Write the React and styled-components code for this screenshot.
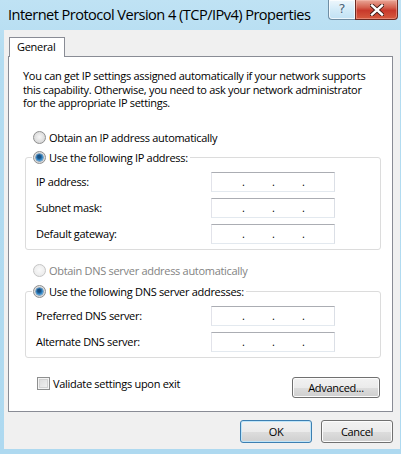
import styled, { createGlobalStyle } from "styled-components";

const GlobalStyle = createGlobalStyle`
  html, body { margin: 0; padding: 0; background: #fff; }
  body {
    font-family: "Open Sans", "Noto Sans", sans-serif;
    font-size: 11px;
    letter-spacing: -0.3px;
    color: #000;
  }
  * { box-sizing: border-box; }
`;

const ipRows = ["IP address:", "Subnet mask:", "Default gateway:"];
const dnsRows = ["Preferred DNS server:", "Alternate DNS server:"];

function Radio({ checked, disabled, children }) {
  return (
    <RadioRow $disabled={disabled}>
      <RadioMark $checked={checked} $disabled={disabled} />
      <span>{children}</span>
    </RadioRow>
  );
}

function IpInput() {
  return (
    <IpBox>
      <Octet />
      <Dot>.</Dot>
      <Octet />
      <Dot>.</Dot>
      <Octet />
      <Dot>.</Dot>
      <Octet />
    </IpBox>
  );
}

function AddressGroup({ legend, rows }) {
  return (
    <Group>
      <Legend>
        <Radio checked>{legend}</Radio>
      </Legend>
      <Rows>
        {rows.map((r) => (
          <FieldRow key={r}>
            <span>{r}</span>
            <IpInput />
          </FieldRow>
        ))}
      </Rows>
    </Group>
  );
}

export default function App() {
  return (
    <>
      <GlobalStyle />
      <Window>
        <TitleBar>
          <Title>Internet Protocol Version 4 (TCP/IPv4) Properties</Title>
          <Caption>
            <HelpButton>?</HelpButton>
            <CloseButton>
              <svg width="14" height="12" viewBox="0 0 14 12">
                <path
                  d="M2 1.5 L12 10.5 M12 1.5 L2 10.5"
                  stroke="#3b1712"
                  strokeWidth="4.2"
                  strokeLinecap="square"
                />
                <path
                  d="M2 1.5 L12 10.5 M12 1.5 L2 10.5"
                  stroke="#fff"
                  strokeWidth="2.4"
                  strokeLinecap="square"
                />
              </svg>
            </CloseButton>
          </Caption>
        </TitleBar>
        <Client>
          <Tabs>
            <Tab>General</Tab>
          </Tabs>
          <Panel>
            <Intro>
              You can get IP settings assigned automatically if your network supports
              <br />
              this capability. Otherwise, you need to ask your network administrator
              <br />
              for the appropriate IP settings.
            </Intro>
            <Option $top={20}>
              <Radio>Obtain an IP address automatically</Radio>
            </Option>
            <GroupWrap $top={4}>
              <AddressGroup legend="Use the following IP address:" rows={ipRows} />
            </GroupWrap>
            <Option $top={13}>
              <Radio disabled>Obtain DNS server address automatically</Radio>
            </Option>
            <GroupWrap $top={5}>
              <AddressGroup legend="Use the following DNS server addresses:" rows={dnsRows} />
            </GroupWrap>
            <BottomRow>
              <CheckLabel>
                <CheckBox />
                <span>Validate settings upon exit</span>
              </CheckLabel>
              <Button $w={88} $h={21}>Advanced...</Button>
            </BottomRow>
          </Panel>
          <Footer>
            <Button $w={72} $h={23} $default>OK</Button>
            <Button $w={72} $h={23}>Cancel</Button>
          </Footer>
        </Client>
      </Window>
    </>
  );
}

const Window = styled.div`
  width: 401px;
  height: 454px;
  display: flex;
  flex-direction: column;
  background: linear-gradient(#bfe2f4, #b3dcf1 60px, #aed9f0);
  padding: 0 1px 5px 4px;
`;

const TitleBar = styled.div`
  height: 30px;
  display: flex;
  align-items: flex-start;
  margin-left: -4px;
  margin-right: -1px;
  padding-right: 3px;
`;

const Title = styled.div`
  flex: 1;
  min-width: 0;
  padding: 4px 0 0 8px;
  font-size: 14.6px;
  letter-spacing: -0.55px;
  line-height: 20px;
  white-space: nowrap;
  color: #000;
`;

const Caption = styled.div`
  display: flex;
  flex: none;
  height: 20px;
`;

const HelpButton = styled.div`
  width: 27px;
  height: 20px;
  border: 1px solid #6f8ea4;
  border-top: none;
  border-right: none;
  border-radius: 0 0 0 4px;
  background: linear-gradient(#eef7fc, #d3ebf8 50%, #c2e2f4);
  box-shadow: inset 0 0 0 1px rgba(255, 255, 255, 0.7);
  color: #4a6478;
  font-size: 13px;
  letter-spacing: 0;
  line-height: 18px;
  text-align: center;
  font-family: "DejaVu Sans", sans-serif;
  text-shadow: 0 0 2px #fff;
`;

const CloseButton = styled.div`
  width: 43px;
  height: 20px;
  border: 1px solid #6b2a22;
  border-top: none;
  border-radius: 0 0 4px 0;
  background: linear-gradient(#e9a797, #d4604e 40%, #c8392b 55%, #d65a3e);
  box-shadow: inset 0 0 0 1px rgba(255, 200, 190, 0.4);
  display: flex;
  align-items: center;
  justify-content: center;
`;

const Client = styled.div`
  flex: 1;
  background: #f0f0f0;
  padding: 7px 7px 5px 4px;
  display: flex;
  flex-direction: column;
`;

const Tabs = styled.div`
  display: flex;
  padding-left: 1px;
`;

const Tab = styled.div`
  position: relative;
  z-index: 1;
  height: 20px;
  margin-bottom: -1px;
  padding: 0 9px 0 7px;
  border: 1px solid #898c95;
  border-bottom: none;
  background: #fff;
  line-height: 18px;
`;

const Panel = styled.div`
  width: 385px;
  border: 1px solid #898c95;
  background: #fff;
  padding: 12px 12px 13px 14px;
  display: flex;
  flex-direction: column;
`;

const Intro = styled.p`
  margin: 0;
  line-height: 13.5px;
  white-space: nowrap;
`;

const Option = styled.div`
  margin: ${(p) => p.$top}px 0 0 10px;
`;

const RadioRow = styled.div`
  display: flex;
  align-items: center;
  gap: 3px;
  height: 16px;
  white-space: nowrap;
  color: ${(p) => (p.$disabled ? "#838383" : "#000")};
`;

const RadioMark = styled.span`
  position: relative;
  width: 13px;
  height: 13px;
  flex: none;
  border-radius: 50%;
  border: 1px solid ${(p) => (p.$disabled ? "#c5c5c5" : "#8e8f8f")};
  background: ${(p) =>
    p.$disabled
      ? "radial-gradient(circle at 50% 45%, #fafafa, #e6e6e6)"
      : "radial-gradient(circle at 50% 45%, #f6f6f6, #d9d9d9 70%, #cfcfcf)"};
  &::after {
    content: "";
    display: ${(p) => (p.$checked ? "block" : "none")};
    position: absolute;
    left: 2px;
    top: 2px;
    width: 7px;
    height: 7px;
    border-radius: 50%;
    background: radial-gradient(circle at 45% 40%, #1a4f80 25%, #2d83c5 55%, #7cc4ef);
    box-shadow: 0 0 0 0.5px #2a6496;
  }
`;

const GroupWrap = styled.div`
  margin: ${(p) => p.$top}px 0 0 2px;
`;

const Group = styled.fieldset`
  width: 356px;
  margin: 0;
  border: 1px solid #dcdcdc;
  border-radius: 3px;
  padding: 6px 0 5px 10px;
`;

const Legend = styled.legend`
  margin-left: -4px;
  padding: 0 2px 0 1px;
`;

const Rows = styled.div`
  display: flex;
  flex-direction: column;
  gap: 6px;
`;

const FieldRow = styled.div`
  display: grid;
  grid-template-columns: 175px 124px;
  align-items: center;
  height: 20px;
  white-space: nowrap;
`;

const IpBox = styled.div`
  width: 124px;
  height: 20px;
  display: flex;
  padding-left: 2px;
  border: 1px solid;
  border-color: #abadb3 #dbdfe6 #e3e9ef #e2e3ea;
  background: #fff;
`;

const Octet = styled.span`
  width: 28px;
`;

const Dot = styled.span`
  width: 2px;
  line-height: 17px;
  font-size: 11px;
  letter-spacing: 0;
  text-align: center;
`;

const BottomRow = styled.div`
  display: flex;
  justify-content: space-between;
  align-items: flex-start;
  margin-top: 19px;
`;

const CheckLabel = styled.div`
  display: flex;
  align-items: center;
  gap: 3px;
  height: 14px;
  margin-left: 14px;
  white-space: nowrap;
`;

const CheckBox = styled.span`
  width: 13px;
  height: 13px;
  flex: none;
  border: 1px solid #8e8f8f;
  background: linear-gradient(135deg, #d8d8d8, #f4f4f4);
  box-shadow: inset 0 0 0 1px #f4f4f4, inset 0 0 0 2px #d2d2d2;
`;

const Button = styled.div`
  width: ${(p) => p.$w}px;
  height: ${(p) => p.$h}px;
  display: flex;
  align-items: center;
  justify-content: center;
  border: 1px solid ${(p) => (p.$default ? "#3c7fb1" : "#707070")};
  border-radius: 3px;
  background: linear-gradient(#f2f2f2, #ebebeb 50%, #dddddd 51%, #cfcfcf);
  box-shadow: inset 0 0 0 1px ${(p) => (p.$default ? "#bfe5f9" : "#fcfcfc")};
  white-space: nowrap;
`;

const Footer = styled.div`
  display: flex;
  justify-content: flex-end;
  gap: 9px;
  margin-top: 8px;
`;
